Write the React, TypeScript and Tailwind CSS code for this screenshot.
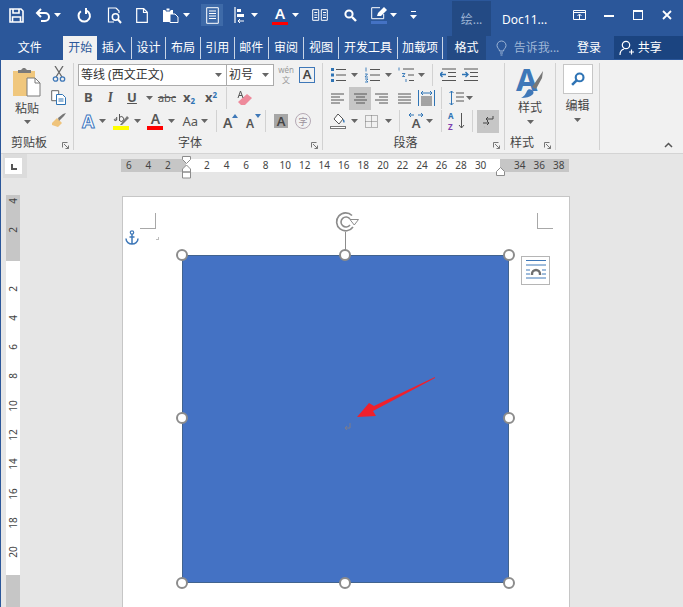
import type { ReactNode } from 'react'

const uiFont = 'font-["Noto_Sans","Noto_Sans_CJK_SC",sans-serif]'

type SvgProps = { w: number; h: number; children: ReactNode; className?: string }

function Svg({ w, h, children, className }: SvgProps) {
  return (
    <svg width={w} height={h} viewBox={`0 0 ${w} ${h}`} fill="none" className={`block shrink-0 ${className ?? ''}`}>
      {children}
    </svg>
  )
}

function Caret({ white = false }: { white?: boolean }) {
  return (
    <Svg w={7} h={4}>
      <path d="M0 0h7L3.5 4z" fill={white ? '#ffffff' : '#666666'} />
    </Svg>
  )
}

/* ---------- title bar icons ---------- */

function SaveIcon() {
  return (
    <Svg w={15} h={15}>
      <path d="M1 1h11l2 2v11H1z" stroke="#fff" strokeWidth="1.6" />
      <path d="M4 1v4h6V1M3.5 14V9h8v5" stroke="#fff" strokeWidth="1.6" />
    </Svg>
  )
}
function UndoIcon() {
  return (
    <Svg w={16} h={14}>
      <path d="M2 5h8a4 4 0 0 1 0 8H6" stroke="#fff" strokeWidth="2" />
      <path d="M6 1 2 5l4 4" stroke="#fff" strokeWidth="2" />
    </Svg>
  )
}
function RedoIcon() {
  return (
    <Svg w={15} h={15}>
      <path d="M9.5 2.6a5.7 5.7 0 1 1-5.6.6" stroke="#fff" strokeWidth="2" />
      <path d="M9 0v6" stroke="#fff" strokeWidth="2" />
    </Svg>
  )
}
function PreviewIcon() {
  return (
    <Svg w={15} h={17}>
      <path d="M9 1H1.5v14H7M9 1l3 3v2" stroke="#fff" strokeWidth="1.2" />
      <circle cx="8.5" cy="10" r="3.2" stroke="#fff" strokeWidth="1.5" />
      <path d="m11 12.5 3 3.5" stroke="#fff" strokeWidth="2" />
    </Svg>
  )
}
function NewDocIcon() {
  return (
    <Svg w={12} h={15}>
      <path d="M.7.7h7l3.6 3.6v10H.7zM7.5.7v3.8h3.8" stroke="#fff" strokeWidth="1.2" />
    </Svg>
  )
}
function QuickPasteIcon() {
  return (
    <Svg w={18} h={16}>
      <path d="M1 3h10v12H1z" fill="#fff" />
      <path d="M4 1h4v3H4z" fill="#fff" stroke="#2b579a" />
      <path d="M8 7h5l3 3v5.5H8z" fill="#2b579a" stroke="#fff" />
    </Svg>
  )
}
function PageListIcon() {
  return (
    <Svg w={13} h={17}>
      <path d="M.7.7h11.6v15.6H.7z" stroke="#fff" />
      <path d="M3 4h7M3 6.5h7M3 9h7M3 11.5h7" stroke="#fff" strokeWidth="1.1" />
    </Svg>
  )
}
function AlignIcon() {
  return (
    <Svg w={11} h={16}>
      <path d="M1 0v16" stroke="#fff" strokeWidth="1.2" />
      <path d="M3 2h4v3H3zM3 7h7v3H3z" fill="#fff" />
      <path d="M10 14H4m2-2-2 2 2 2" stroke="#fff" />
    </Svg>
  )
}
function TitleFontColorIcon() {
  return (
    <div className="flex flex-col items-center">
      <span className={`${uiFont} text-[15px] font-semibold leading-[15px] text-white`}>A</span>
      <span className="mt-[1px] block h-[3px] w-4 bg-[#ff0000]" />
    </div>
  )
}
function BookIcon() {
  return (
    <Svg w={16} h={12}>
      <path d="M.7.7h6v10.6h-6zM9.3.7h6v10.6h-6z" stroke="#fff" />
      <path d="M2.3 3.5h3M2.3 6h3M2.3 8.5h3M11 3.5h3M11 6h3M11 8.5h3" stroke="#fff" />
    </Svg>
  )
}
function SearchIcon({ color = '#fff', w = 13 }: { color?: string; w?: number }) {
  return (
    <svg width={w} height={w} viewBox="0 0 13 13" fill="none" className="block shrink-0">
      <circle cx="5" cy="5" r="3.6" stroke={color} strokeWidth="2" />
      <path d="m8 8 4 4" stroke={color} strokeWidth="2.4" />
    </svg>
  )
}
function PenIcon() {
  return (
    <div className="flex flex-col">
      <Svg w={16} h={13}>
        <path d="M9 .7H.7v11h12V7" stroke="#fff" />
        <path d="m6 9 1-3 6-6 3 3-6 6z" fill="#fff" />
      </Svg>
      <span className="mt-[1px] block h-[3px] w-4 bg-[#4472c4]" />
    </div>
  )
}
function MoreIcon() {
  return (
    <Svg w={7} h={8}>
      <path d="M1 .5h5" stroke="#fff" />
      <path d="M0 4h7L3.5 8z" fill="#fff" />
    </Svg>
  )
}

/* ---------- ribbon icons ---------- */

function PasteBigIcon() {
  return (
    <Svg w={30} h={30}>
      <path d="M1 4h22v25H1z" fill="#f0c77d" />
      <path d="M6 3h3l2-2h2l2 2h4v3H6z" fill="#7a7a7a" />
      <path d="M15 11h8l5 5v13H15z" fill="#fff" stroke="#7a7a7a" />
      <path d="M23 11v5h5" stroke="#7a7a7a" />
    </Svg>
  )
}
function ScissorsIcon() {
  return (
    <Svg w={14} h={16}>
      <path d="m3 0 7 11M11 0 4 11" stroke="#666" strokeWidth="1.3" />
      <circle cx="3.5" cy="13" r="2.2" stroke="#3f78b8" strokeWidth="1.3" />
      <circle cx="10.5" cy="13" r="2.2" stroke="#3f78b8" strokeWidth="1.3" />
    </Svg>
  )
}
function CopyIcon() {
  return (
    <Svg w={15} h={15}>
      <path d="M.7.7h7v10h-7z" fill="#fff" stroke="#666" />
      <path d="M5.5 4.5h6l3 3v7h-9z" fill="#fff" stroke="#2f74b5" />
      <path d="M7.5 9h5M7.5 11h5" stroke="#2f74b5" />
    </Svg>
  )
}
function BrushIcon() {
  return (
    <Svg w={16} h={15}>
      <path d="M1 10 6 5l5 5-4 4-6-2z" fill="#efc47c" />
      <path d="m7 5 1 3 5-5 2-3-3 1z" fill="#777" />
    </Svg>
  )
}
function Launcher() {
  return (
    <Svg w={7} h={7}>
      <path d="M.5 5.5v-5h5" stroke="#777" />
      <path d="m2 2 4.5 4.5M6.5 3.5v3h-3" stroke="#777" />
    </Svg>
  )
}
function PhoneticIcon() {
  return (
    <div className={`${uiFont} flex w-[18px] flex-col items-center leading-[10px] text-[#9a9a9a]`}>
      <span className="text-[8px]">wén</span>
      <span className="text-[8px]">文</span>
    </div>
  )
}
function TextEffectIcon() {
  return (
    <span className="text-[18px] font-bold leading-[18px] text-white [-webkit-text-stroke:1px_#3f78c0]">A</span>
  )
}
function HighlightIcon() {
  return (
    <div className="flex flex-col items-start">
      <Svg w={16} h={12}>
        <path d="M7 12 14 3l2 2-7 7z" fill="#777" />
        <path d="M.5 8V1M.5 4.5a2.4 2.4 0 1 1 0 3" stroke="#555" transform="translate(6 0)" />
        <path d="M3.7 6.6c-2.4-1.6-3.2.8-1.5 1 1 .1 1.5-.3 1.5-1V4" stroke="#555" />
      </Svg>
      <span className="mt-[1px] block h-1 w-4 bg-[#ffff00]" />
    </div>
  )
}
function FontColorIcon() {
  return (
    <div className="flex flex-col items-center">
      <span className={`${uiFont} text-[14px] font-semibold leading-[13px] text-[#555]`}>A</span>
      <span className="mt-[1px] block h-1 w-4 bg-[#ff0000]" />
    </div>
  )
}
function EraserIcon() {
  return (
    <Svg w={16} h={16}>
      <path d="m5 15-3-3 9-8 5 4-7 7z" fill="#ee8a9b" />
      <path d="M2 8 4.5 1 7 8M3 5.5h3" stroke="#555" />
    </Svg>
  )
}
function GrowFontIcon({ up }: { up: boolean }) {
  return (
    <div className="relative flex h-[18px] w-[18px] items-end">
      <span className={`${uiFont} font-semibold leading-none text-[#555] ${up ? 'text-[14px]' : 'text-[12px]'}`}>A</span>
      <svg width="6" height="4" viewBox="0 0 6 4" className="absolute right-[3px] top-[2px]">
        <path d={up ? 'M0 4h6L3 0z' : 'M0 0h6L3 4z'} fill="#3f78b8" />
      </svg>
    </div>
  )
}
function Lines({ kind }: { kind: 'left' | 'center' | 'right' | 'justify' }) {
  const rows = {
    left: ['M1 2h13', 'M1 5h9', 'M1 8h13', 'M1 11h9'],
    center: ['M1 2h13', 'M3 5h9', 'M1 8h13', 'M3 11h9'],
    right: ['M1 2h13', 'M5 5h9', 'M1 8h13', 'M5 11h9'],
    justify: ['M1 2h13', 'M1 5h13', 'M1 8h13', 'M1 11h13'],
  }[kind]
  return (
    <Svg w={15} h={13}>
      {rows.map((d) => (
        <path key={d} d={d} stroke="#555" />
      ))}
    </Svg>
  )
}
function DistributeIcon() {
  return (
    <Svg w={17} h={16}>
      <path d="M.5 0v16M16.5 0v16" stroke="#2f74b5" />
      <path d="M3 3h11M5 1 3 3l2 2m7-4 2 2-2 2" stroke="#2f74b5" />
      <path d="M3 7h11M3 9h11M3 11h11M3 13h11M3 15h11" stroke="#555" />
    </Svg>
  )
}
function BulletIcon({ kind }: { kind: 'dot' | 'num' | 'multi' }) {
  return (
    <Svg w={16} h={16}>
      {kind === 'dot' && (
        <path d="M1 1h3v3H1zM1 6.500h3v3H1zM1 12h3v3H1z" fill="#2f74b5" />
      )}
      {kind === 'num' && (
        <path d="M2 .5v4M1 7h2.500L1 10h3M1 12h3l-1.500 1.500L4 15H1" stroke="#2f74b5" strokeWidth="0.9" />
      )}
      {kind === 'multi' && (
        <path d="M1 .5v3M4 6.500h3l-2.500 3H7M8 12v3" stroke="#2f74b5" strokeWidth="0.9" />
      )}
      {kind === 'multi' ? (
        <path d="M5 2h11M10 8h6M11 13.500h5" stroke="#555" />
      ) : (
        <path d="M6 2.500h10M6 8h10M6 13.500h10" stroke="#555" />
      )}
    </Svg>
  )
}
function IndentIcon({ flip }: { flip?: boolean }) {
  return (
    <Svg w={16} h={14}>
      {flip ? (
        <path d="M0 6.500h6m-2.500-2.500 2.500 2.500-2.500 2.500" stroke="#2f74b5" strokeWidth="1.400" />
      ) : (
        <path d="M6 6.500H0m2.500-2.500L0 6.500 2.500 9" stroke="#2f74b5" strokeWidth="1.400" />
      )}
      <path d="M2 1h14M8 4.500h8M8 8.500h8M2 12.500h14" stroke="#555" />
    </Svg>
  )
}
function LineSpacingIcon() {
  return (
    <Svg w={15} h={16}>
      <path d="M2.500 1v14M.5 3l2-2 2 2M.5 13l2 2 2-2" stroke="#2f74b5" />
      <path d="M7 3h8M7 7h8M7 11h8" stroke="#555" />
    </Svg>
  )
}
function FillIcon() {
  return (
    <div className="flex flex-col items-center">
      <Svg w={16} h={12}>
        <path d="m4 6 4-5 5 5-4 5z" fill="#fff" stroke="#555" />
        <path d="M13 6c2 1 2 3 1 4-1-1-1-2-1-4z" fill="#2f74b5" />
      </Svg>
      <span className="mt-[1px] block h-[3px] w-4 border border-[#777] bg-white" />
    </div>
  )
}
function BordersIcon() {
  return (
    <Svg w={13} h={13}>
      <path d="M.5.5h12v12H.5zM6.500.5v12M.5 6.500h12" stroke="#777" strokeDasharray="1 1" />
    </Svg>
  )
}
function DirectionIcon() {
  return (
    <div className="relative flex h-[18px] w-[16px] items-end justify-center">
      <span className={`${uiFont} text-[13px] font-semibold leading-[13px] text-[#555]`}>A</span>
      <svg width="16" height="6" viewBox="0 0 16 6" className="absolute left-0 top-0" fill="none">
        <path d="M1 3h5M3 1 1 3l2 2m7-2h5m-2-2 2 2-2 2" stroke="#2f74b5" />
      </svg>
    </div>
  )
}
function SortIcon() {
  return (
    <div className="flex items-center gap-[4px]">
      <div className={`${uiFont} flex flex-col text-[8px] font-bold leading-[11px]`}>
        <span className="text-[#2f74b5]">A</span>
        <span className="text-[#7d3fb0]">Z</span>
      </div>
      <Svg w={7} h={16}>
        <path d="M3.500 0v15M1 12l2.500 3L6 12" stroke="#555" />
      </Svg>
    </div>
  )
}
function PilcrowIcon() {
  return (
    <Svg w={12} h={13}>
      <path d="M11 1v3H4M6 2 4 4l2 2" stroke="#444" />
      <path d="M1 8h6M5 6l2 2-2 2M3 12h-.1" stroke="#444" />
    </Svg>
  )
}
function StyleBigIcon() {
  return (
    <div className="relative h-[31px] w-[28px]">
      <span className={`${uiFont} absolute -top-[3px] left-0 text-[31px] font-bold leading-[31px] text-[#3f78b8]`}>A</span>
      <svg width="28" height="31" viewBox="0 0 28 31" fill="none" className="absolute left-0 top-0">
        <path d="m16 20 7-10 4-6-1 7-6 11z" fill="#777" />
        <path d="M5 31c5 0 9-1 11-3 2-1 2-4 0-5s-4-1-5 1-2 5-6 7z" fill="#3f78b8" />
      </svg>
    </div>
  )
}

/* ---------- small layout helpers ---------- */

function Sep() {
  return <span className="mx-[4px] block h-[22px] w-px shrink-0 bg-[#d2d2d2]" />
}

function TitleTab({ label, className }: { label: string; className: string }) {
  return (
    <div className={`flex h-[22px] items-center justify-center border-r border-[#c9d5e6] text-white ${className}`}>
      {label}
    </div>
  )
}

function GroupLabel({ label, launcher = true }: { label: string; launcher?: boolean }) {
  return (
    <div className="flex h-[18px] items-end">
      <span className="flex-1 text-center text-[12px] leading-[14px]">{label}</span>
      {launcher ? (
        <span className="flex w-[16px] justify-center pb-[1px]"><Launcher /></span>
      ) : null}
    </div>
  )
}

const rulerTop = ['6', '4', '2', '', '2', '4', '6', '8', '10', '12', '14', '16', '18', '20', '22', '24', '26', '28', '30', '', '34', '36', '38']
const rulerLeft = ['4', '2', '', '2', '4', '6', '8', '10', '12', '14', '16', '18', '20', '', '4']

function Handle({ className }: { className: string }) {
  return <span className={`absolute block h-[12px] w-[12px] rounded-full border-2 border-[#8c8c8c] bg-white ${className}`} />
}

function Ribbon() {
  return (
    <div className="flex h-[94px] border-b border-[#d4d4d4] bg-[#f1f1f1] pt-[3px] text-[#444]">
      {/* clipboard */}
      <div className="flex h-[87px] w-[73px] flex-col border-r border-[#d2d2d2]">
        <div className="flex h-[69px]">
          <div className="flex w-[52px] flex-col items-center pt-[4px]">
            <PasteBigIcon />
            <span className="mt-[3px] text-[12px] leading-[18px]">粘贴</span>
            <span className="mt-[2px]"><Caret /></span>
          </div>
          <div className="flex w-[11px] flex-col items-center gap-[8px] pt-[3px]">
            <ScissorsIcon />
            <CopyIcon />
            <BrushIcon />
          </div>
        </div>
        <GroupLabel label="剪贴板" />
      </div>

      {/* font */}
      <div className="flex h-[87px] w-[249px] flex-col border-r border-[#d2d2d2]">
        <div className="flex h-[23px] items-center pl-[4px]">
          <div className="flex h-[22px] w-[149px] items-center justify-between border border-[#ababab] bg-white pl-[2px] pr-[4px] text-[12px] text-[#333]">
            等线 (西文正文)
            <Caret />
          </div>
          <div className="flex h-[22px] w-[47px] items-center justify-between border border-l-0 border-[#ababab] bg-white pl-[2px] pr-[4px] text-[12px] text-[#333]">
            初号
            <Caret />
          </div>
          <span className="ml-[3px]"><PhoneticIcon /></span>
          <span className={`${uiFont} ml-[4px] flex h-[16px] w-[16px] items-center justify-center border border-[#3f78b8] text-[13px] font-semibold leading-none`}>A</span>
        </div>
        <div className={`${uiFont} flex h-[24px] items-center text-[13px] font-bold text-[#555]`}>
          <span className="w-[25px] pl-[10px]">B</span>
          <span className="w-[22px] pl-[9px] font-serif italic">I</span>
          <span className="w-[22px] text-center underline">U</span>
          <span className="ml-[3px] mr-[3px]"><Caret /></span>
          <span className="w-[22px] text-center text-[11px] font-normal line-through">abc</span>
          <span className="ml-[5px] w-[17px] text-[13px]">x<sub className="text-[8px] text-[#2f74b5]">2</sub></span>
          <span className="ml-[5px] w-[17px] text-[13px]">x<sup className="text-[8px] text-[#2f74b5]">2</sup></span>
          <span className="ml-[4px] block h-[22px] w-px bg-[#d2d2d2]" />
          <span className="ml-[9px]"><EraserIcon /></span>
        </div>
        <div className="flex h-[22px] items-center pl-[8px]">
          <TextEffectIcon />
          <span className="ml-[5px]"><Caret /></span>
          <span className="ml-[7px]"><HighlightIcon /></span>
          <span className="ml-[5px]"><Caret /></span>
          <span className="ml-[6px]"><FontColorIcon /></span>
          <span className="ml-[5px]"><Caret /></span>
          <span className={`${uiFont} ml-[7px] text-[13px] leading-none text-[#555]`}>Aa</span>
          <span className="ml-[3px]"><Caret /></span>
          <span className="ml-[4px]"><Sep /></span>
          <span className="ml-[2px]"><GrowFontIcon up /></span>
          <span className="ml-[5px]"><GrowFontIcon up={false} /></span>
          <span className="ml-[1px] block h-[22px] w-px bg-[#d2d2d2]" />
          <span className={`${uiFont} ml-[8px] flex h-[14px] w-[14px] items-center justify-center bg-[#a6a6a6] text-[13px] font-semibold leading-none text-[#444]`}>A</span>
          <span className="ml-[7px] flex h-[16px] w-[16px] items-center justify-center rounded-full border border-[#b5a9b5] text-[9px] leading-none text-[#9a8f9a]">字</span>
        </div>
        <GroupLabel label="字体" />
      </div>

      {/* paragraph */}
      <div className="flex h-[87px] w-[182px] flex-col border-r border-[#d2d2d2]">
        <div className="flex h-[23px] items-center pl-[7px]">
          <BulletIcon kind="dot" />
          <span className="ml-[5px]"><Caret /></span>
          <span className="ml-[6px]"><BulletIcon kind="num" /></span>
          <span className="ml-[5px]"><Caret /></span>
          <span className="ml-[6px]"><BulletIcon kind="multi" /></span>
          <span className="ml-[4px]"><Caret /></span>
          <span className="ml-[3px]"><Sep /></span>
          <span className="ml-[3px]"><IndentIcon /></span>
          <span className="ml-[6px]"><IndentIcon flip /></span>
        </div>
        <div className="flex h-[24px] items-center pl-[7px]">
          <Lines kind="left" />
          <span className="ml-[4px] flex h-[23px] w-[22px] items-center justify-center bg-[#c6c6c6]"><Lines kind="center" /></span>
          <span className="ml-[3px]"><Lines kind="right" /></span>
          <span className="ml-[8px]"><Lines kind="justify" /></span>
          <span className="ml-[6px]"><DistributeIcon /></span>
          <span className="ml-[2px]"><Sep /></span>
          <span className="ml-[3px]"><LineSpacingIcon /></span>
          <span className="ml-[2px]"><Caret /></span>
        </div>
        <div className="flex h-[22px] items-center pl-[7px]">
          <FillIcon />
          <span className="ml-[5px]"><Caret /></span>
          <span className="ml-[7px]"><BordersIcon /></span>
          <span className="ml-[7px]"><Caret /></span>
          <span className="ml-[3px]"><Sep /></span>
          <span className="ml-[4px]"><DirectionIcon /></span>
          <span className="ml-[2px]"><Caret /></span>
          <span className="ml-[4px]"><Sep /></span>
          <span className="ml-[2px]"><SortIcon /></span>
          <span className="ml-[7px] block h-[22px] w-px bg-[#d2d2d2]" />
          <span className="ml-[4px] flex h-[23px] w-[22px] items-center justify-center bg-[#c6c6c6]"><PilcrowIcon /></span>
        </div>
        <GroupLabel label="段落" />
      </div>

      {/* styles */}
      <div className="flex h-[87px] w-[51px] flex-col border-r border-[#d2d2d2]">
        <div className="flex h-[69px] flex-col items-center pt-[4px]">
          <StyleBigIcon />
          <span className="mt-[1px] text-[12px] leading-[18px]">样式</span>
          <span className="mt-[3px]"><Caret /></span>
        </div>
        <GroupLabel label="样式" />
      </div>

      {/* editing */}
      <div className="flex h-[87px] w-[44px] flex-col items-center border-r border-[#d2d2d2] pt-[1px]">
        <div className="flex h-[30px] w-[30px] items-center justify-center border border-[#c6c6c6] bg-white">
          <SearchIconFlip />
        </div>
        <span className="mt-[3px] text-[12px] leading-[18px]">编辑</span>
        <span className="mt-[3px]"><Caret /></span>
      </div>

      <div className="flex flex-1 items-end justify-end pb-[5px] pr-[10px]">
        <Svg w={9} h={6}>
          <path d="m1 5 3.500-3.500L8 5" stroke="#555" strokeWidth="1.500" />
        </Svg>
      </div>
    </div>
  )
}

function SearchIconFlip() {
  return (
    <span className="block -scale-x-100">
      <SearchIcon color="#2f74b5" w={14} />
    </span>
  )
}

export default function App() {
  return (
    <div className={`${uiFont} flex h-[607px] w-[683px] flex-col overflow-hidden border-l border-[#2b579a] bg-[#e6e6e6]`}>
      {/* title bar */}
      <div className="flex h-9 items-start bg-[#2b579a] text-white">
        <div className="ml-[1px] flex h-[30px] w-[28px] items-center justify-center"><SaveIcon /></div>
        <div className="flex h-[30px] w-[40px] items-center gap-[3px] pl-[5px]"><UndoIcon /><Caret white /></div>
        <div className="flex h-[30px] w-[28px] items-center justify-center"><RedoIcon /></div>
        <div className="ml-[2px] flex h-[30px] w-[28px] items-center justify-center"><PreviewIcon /></div>
        <div className="flex h-[30px] w-[28px] items-center justify-center"><NewDocIcon /></div>
        <div className="flex h-[30px] w-[38px] items-center gap-[3px] pl-[6px]"><QuickPasteIcon /><Caret white /></div>
        <div className="ml-[7px] mt-[4px] flex h-[22px] w-[22px] items-center justify-center bg-[#3e6aa8]"><PageListIcon /></div>
        <div className="flex h-[30px] w-[39px] items-center gap-[6px] pl-[11px]"><AlignIcon /><Caret white /></div>
        <div className="flex h-[30px] w-[40px] items-center gap-[4px] pl-[10px]"><TitleFontColorIcon /><Caret white /></div>
        <div className="ml-[4px] flex h-[30px] w-[28px] items-center justify-center"><BookIcon /></div>
        <div className="ml-[2px] flex h-[30px] w-[28px] items-center justify-center"><SearchIcon /></div>
        <div className="ml-[2px] flex h-[30px] w-[34px] items-center gap-[3px] pl-[5px]"><PenIcon /><Caret white /></div>
        <div className="flex h-[30px] w-[26px] items-center justify-center"><MoreIcon /></div>
        <div className="ml-[26px] mt-[1px] flex h-[35px] w-[39px] items-center justify-center bg-[#234a84] pt-[3px] text-[12px] text-[#9fb6d6]">绘...</div>
        <div className="flex h-9 w-[74px] items-center pl-[11px] pt-[3px] text-[12px]">Doc11...</div>
        <div className="flex h-[30px] w-[29px] items-center justify-center">
          <Svg w={13} h={10}>
            <path d="M.5.5h12v9H.5zM.5 2.500h12" stroke="#fff" />
            <path d="M6.500 9V4.500M4.500 6l2-2 2 2" stroke="#fff" />
          </Svg>
        </div>
        <div className="flex h-[30px] w-[29px] items-center justify-center"><span className="mt-[2px] block h-[2px] w-[10px] bg-white" /></div>
        <div className="flex h-[30px] w-[29px] items-center justify-center">
          <span className="block h-[10px] w-[10px] border border-t-2 border-white" />
        </div>
        <div className="flex h-[30px] w-[29px] items-center justify-center">
          <Svg w={10} h={10}>
            <path d="m1 1 8 8M9 1 1 9" stroke="#fff" strokeWidth="1.800" />
          </Svg>
        </div>
      </div>

      {/* tabs */}
      <div className="flex h-6 items-center bg-[#2b579a] text-[12px] text-white">
        <div className="flex w-[63px] justify-center pr-[5px]">文件</div>
        <div className="flex h-6 w-[34px] items-center justify-center bg-[#f1f1f1] text-[#2b579a]">开始</div>
        <TitleTab label="插入" className="w-[35px]" />
        <TitleTab label="设计" className="w-[35px]" />
        <TitleTab label="布局" className="w-[35px]" />
        <TitleTab label="引用" className="w-[34px]" />
        <TitleTab label="邮件" className="w-[35px]" />
        <TitleTab label="审阅" className="w-[35px]" />
        <TitleTab label="视图" className="w-[36px]" />
        <TitleTab label="开发工具" className="w-[59px]" />
        <TitleTab label="加载项" className="w-[46px]" />
        <div className="ml-[4px] flex h-6 w-[39px] items-center justify-center bg-[#234a84]">格式</div>
        <div className="ml-[10px] flex w-[12px] flex-col items-center">
          <Svg w={11} h={16}>
            <path d="M3.500 11c0-2-2.500-3-2.500-5.500a4.500 4.500 0 0 1 9 0C10 8 7.500 9 7.500 11zM4 13h3M4.500 15h2" stroke="#9fb6d6" />
          </Svg>
        </div>
        <span className="ml-[6px] w-[56px] text-[#9fb6d6]">告诉我...</span>
        <span className="ml-[8px] w-[34px]">登录</span>
        <div className="ml-[3px] flex h-[23px] w-[70px] items-center gap-[4px] self-start bg-[#1b4480] pl-[5px]">
          <Svg w={15} h={15}>
            <circle cx="7" cy="5" r="3.700" stroke="#fff" strokeWidth="1.200" />
            <path d="M1 15c0-4 2-5.500 4-6M10 12h5M12.500 9.500v5" stroke="#fff" strokeWidth="1.200" />
          </Svg>
          <span>共享</span>
        </div>
      </div>

      <Ribbon />

      {/* ruler row */}
      <div className="flex h-[41px] shrink-0 items-start">
        <div className="ml-[2px] flex h-[24px] w-[24px] items-start bg-[#dcdcdc] pl-[2px] pt-[4px]">
          <div className="flex h-[16px] w-[17px] items-center justify-center bg-white">
            <span className="mt-[2px] block h-[6px] w-[6px] border-b-2 border-l-2 border-[#555]" />
          </div>
        </div>
        <div className="relative ml-[94px] mt-[5px] flex h-[13px] w-[448px] text-[10px] leading-[13px] text-[#444]">
          <div className="w-[65px] bg-[#c6c6c6]" />
          <div className="w-[314px] bg-white" />
          <div className="flex-1 bg-[#c6c6c6]" />
          <div className="absolute -left-[2px] top-0 flex">
            {rulerTop.map((n, i) => (
              <span key={i} className="w-[19.55px] text-center">{n}</span>
            ))}
          </div>
          <svg width="10" height="26" viewBox="0 0 10 26" fill="none" className="absolute left-[61px] -top-[3px]">
            <path d="M.5.500h8v3l-4 4-4-4z" fill="#fff" stroke="#8c8c8c" />
            <path d="m4.500 9 4 4v3h-8v-3zM.5 16h8v6h-8z" fill="#fff" stroke="#8c8c8c" />
          </svg>
          <svg width="10" height="9" viewBox="0 0 10 9" fill="none" className="absolute left-[375px] top-[8px]">
            <path d="m4.500.5 4 4v4h-8v-4z" fill="#fff" stroke="#8c8c8c" />
          </svg>
        </div>
      </div>

      {/* document */}
      <div className="flex min-h-0 flex-1 items-start">
        <div className="relative ml-[5px] flex h-[412px] w-[14px] shrink-0 flex-col text-[10px] text-[#444]">
          <div className="h-[66px] bg-[#c6c6c6]" />
          <div className="h-[314px] bg-white" />
          <div className="flex-1 bg-[#c6c6c6]" />
          <div className="absolute -top-[9px] left-0 flex w-[14px] flex-col">
            {rulerLeft.map((n, i) => (
              <span key={i} className="flex h-[29.3px] items-center justify-center">
                <span className="block -rotate-90 leading-none">{n}</span>
              </span>
            ))}
          </div>
        </div>
        <div className="relative ml-[102px] mt-[1px] h-[420px] w-[448px] shrink-0 border border-b-0 border-[#c6c6c6] bg-white">
          <span className="absolute left-[17px] top-[16px] block h-[16px] w-[16px] border-b border-r border-[#a8a8a8]" />
          <span className="absolute left-[414px] top-[16px] block h-[16px] w-[16px] border-b border-l border-[#a8a8a8]" />
          <svg width="14" height="15" viewBox="0 0 14 15" fill="none" className="absolute left-[1px] top-[33px] translate-x-[1px]">
            <circle cx="7" cy="2.500" r="1.700" stroke="#3f78b8" strokeWidth="1.200" />
            <path d="M7 4v10M1 8.500c0 3.500 3 5.500 6 5.500s6-2 6-5.500M4.500 7h5" stroke="#3f78b8" strokeWidth="1.500" />
          </svg>
          <span className="absolute left-[33px] top-[40px] block h-[3px] w-[3px] border-b border-r border-[#bdbdbd]" />

          <div className="relative ml-[59px] mt-[58px] h-[328px] w-[327px] border border-[#41638f] bg-[#4472c4]">
            <span className="absolute -top-[24px] left-[162px] block h-[24px] w-px bg-[#8c8c8c]" />
            <svg width="27" height="22" viewBox="0 0 27 22" fill="none" className="absolute -top-[45px] left-[150px]">
              <path d="M20 16A9 9 0 1 1 19 4.500" stroke="#8c8c8c" strokeWidth="1.600" />
              <path d="M17 14a5 5 0 1 1 0-6" stroke="#8c8c8c" strokeWidth="1.600" />
              <path d="M17 8.500h8.500l-4.250 5.500z" fill="#fff" stroke="#8c8c8c" />
            </svg>
            <Handle className="-left-[7px] -top-[7px]" />
            <Handle className="-top-[7px] left-[156px]" />
            <Handle className="-right-[7px] -top-[7px]" />
            <Handle className="-left-[7px] top-[156px]" />
            <Handle className="-right-[7px] top-[156px]" />
            <Handle className="-bottom-[7px] -left-[7px]" />
            <Handle className="-bottom-[7px] left-[156px]" />
            <Handle className="-bottom-[7px] -right-[7px]" />
            <svg width="80" height="44" viewBox="0 0 80 44" fill="none" className="absolute left-[174px] top-[120px]">
              <path d="M78 1 17 30l-5-3L0 41l19-1-3-5L78 2z" fill="#f0202c" />
            </svg>
            <svg width="8" height="10" viewBox="0 0 8 10" fill="none" className="absolute left-[161px] top-[166px]">
              <path d="M6 1v5H1M3 4 1 6l2 2" stroke="#7c7c8a" />
            </svg>
          </div>

          <div className="absolute left-[398px] top-[59px] flex h-[29px] w-[29px] items-start justify-center border border-[#b5b5b5] bg-white pt-[3px]">
            <svg width="20" height="20" viewBox="0 0 20 20" fill="none">
              <path d="M0 .5h20M0 5h20M0 10h4M16 10h4M0 14h4M16 14h4M0 18h20" stroke="#3f78b8" />
              <path d="M6 15v-1a4 4 0 0 1 8 0v1" stroke="#6f6f6f" strokeWidth="2.400" />
            </svg>
          </div>
        </div>
      </div>
    </div>
  )
}
